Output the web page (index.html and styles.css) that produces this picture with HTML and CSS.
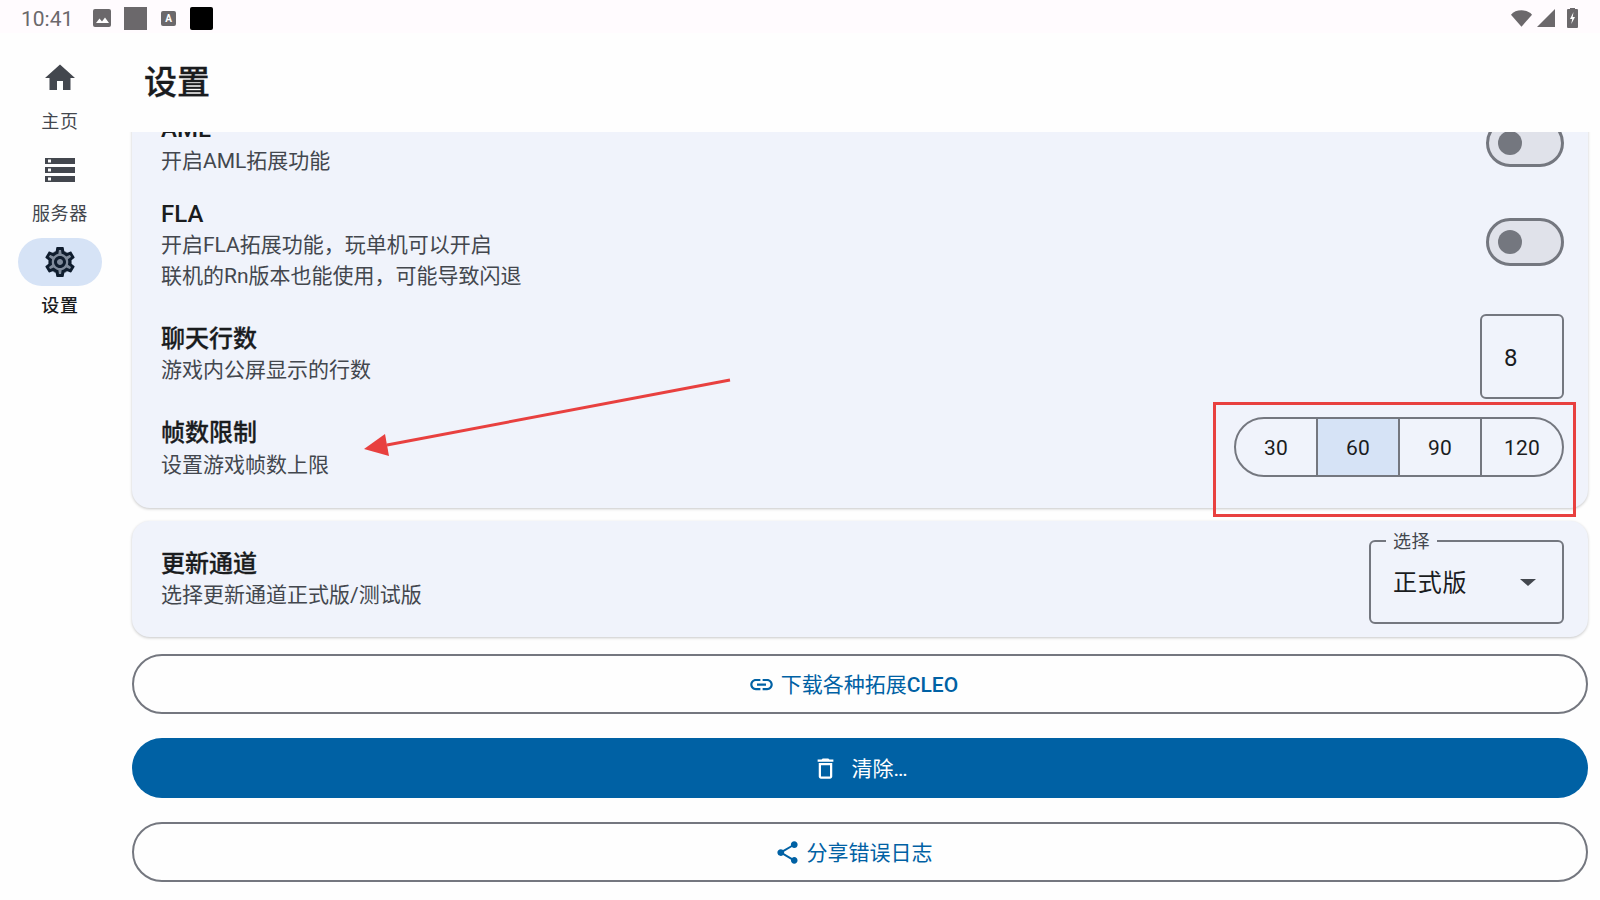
FILE: index.html
```html
<!DOCTYPE html>
<html lang="zh-CN">
<head>
  <meta charset="UTF-8">
  <title>设置</title>
  <link rel="stylesheet" href="styles.css">
</head>
<body>
  <div class="phone">

    <div class="statusbar">
      <span class="time">10:41</span>
      <svg class="st-image" viewBox="0 0 18 18"><rect width="18" height="18" rx="2" fill="#6b686b"/><path d="M3 14l3.5-4.5 2.5 3 3-4 4 5.500z" fill="#fff"/></svg>
      <span class="st-square"></span>
      <span class="st-a">A</span>
      <span class="st-black"></span>
      <span class="st-spacer"></span>
      <svg class="st-wifi" viewBox="0 0 24 18"><path d="M12 18L1 5.500C3.500 2.500 7.500 1 12 1s8.500 1.500 11 4.500z" fill="#6b686b"/></svg>
      <svg class="st-signal" viewBox="0 0 18 18"><path d="M18 0v18H0z" fill="#6b686b"/></svg>
      <svg class="st-battery" viewBox="0 0 11 20"><path d="M3 1V0h5v1h2a1 1 0 0 1 1 1v17a1 1 0 0 1-1 1H1a1 1 0 0 1-1-1V2a1 1 0 0 1 1-1z" fill="#6b686b"/><path d="M6.500 4L3 11h2.200L4.300 16 8 9H5.700z" fill="#fff"/></svg>
    </div>

    <div class="main">
      <nav class="rail">
        <div class="rail-item">
          <div class="pill">
            <svg class="icon" viewBox="0 0 24 24"><path d="M10 20v-6h4v6h5v-8h3L12 3 2 12h3v8z"/></svg>
          </div>
          <span>主页</span>
        </div>
        <div class="rail-item">
          <div class="pill">
            <svg class="icon" viewBox="0 0 24 24"><path d="M2 20h20v-4H2v4zm2-3h2v2H4v-2zM2 4v4h20V4H2zm4 3H4V5h2v2zm-4 7h20v-4H2v4zm2-3h2v2H4v-2z"/></svg>
          </div>
          <span>服务器</span>
        </div>
        <div class="rail-item active">
          <div class="pill">
            <svg class="icon gear" viewBox="0 0 24 24">
              <circle cx="12" cy="12" r="8" fill="#7f8b9b"/>
              <path d="M19.430 12.980c.04-.32.07-.64.07-.98 0-.34-.03-.66-.07-.98l2.110-1.650c.19-.15.24-.42.12-.64l-2-3.460c-.09-.16-.26-.25-.44-.25-.06 0-.12.01-.17.03l-2.490 1c-.52-.4-1.080-.73-1.690-.98l-.38-2.650C14.460 2.180 14.250 2 14 2h-4c-.25 0-.46.18-.49.42l-.38 2.650c-.61.25-1.170.59-1.690.98l-2.490-1c-.06-.02-.12-.03-.18-.03-.17 0-.34.09-.43.25l-2 3.460c-.13.22-.07.49.12.64l2.110 1.650c-.04.32-.07.65-.07.98 0 .33.03.66.07.98l-2.110 1.650c-.19.15-.24.42-.12.64l2 3.460c.09.16.26.25.44.25.06 0 .12-.01.17-.03l2.490-1c.52.4 1.080.73 1.690.98l.38 2.650c.03.24.24.42.49.42h4c.25 0 .46-.18.49-.42l.38-2.650c.61-.25 1.170-.59 1.690-.98l2.490 1c.06.02.12.03.18.03.17 0 .34-.09.43-.25l2-3.460c.12-.22.07-.49-.12-.64l-2.110-1.650zm-1.980-1.710c.04.31.05.52.05.73 0 .21-.02.43-.05.73l-.14 1.130.89.7 1.080.84-.7 1.210-1.270-.51-1.040-.42-.9.68c-.43.32-.84.56-1.250.73l-1.060.43-.16 1.130-.2 1.350h-1.400l-.19-1.350-.16-1.130-1.060-.43c-.43-.18-.83-.41-1.230-.71l-.91-.7-1.060.43-1.270.51-.7-1.210 1.080-.84.89-.7-.14-1.130c-.03-.31-.05-.54-.05-.74s.02-.43.05-.73l.14-1.130-.89-.7-1.080-.84.7-1.210 1.270.51 1.040.42.9-.68c.43-.32.84-.56 1.250-.73l1.060-.43.16-1.130.2-1.350h1.390l.19 1.350.16 1.130 1.060.43c.43.18.83.41 1.230.71l.91.7 1.060-.43 1.270-.51.7 1.210-1.070.85-.89.7.14 1.130zM12 8c-2.210 0-4 1.790-4 4s1.790 4 4 4 4-1.790 4-4-1.790-4-4-4zm0 6c-1.100 0-2-.9-2-2s.9-2 2-2 2 .9 2 2-.9 2-2 2z"/>
            </svg>
          </div>
          <span>设置</span>
        </div>
      </nav>

      <div class="content">
        <h1 class="page-title">设置</h1>

        <div class="scroller">
          <section class="card card-game">
            <div class="row row-aml">
              <div class="row-text">
                <div class="row-title">AML</div>
                <div class="row-sub">开启AML拓展功能</div>
              </div>
              <div class="switch"><span class="knob"></span></div>
            </div>

            <div class="row row-fla">
              <div class="row-text">
                <div class="row-title">FLA</div>
                <div class="row-sub">开启FLA拓展功能，玩单机可以开启</div>
                <div class="row-sub">联机的Rn版本也能使用，可能导致闪退</div>
              </div>
              <div class="switch"><span class="knob"></span></div>
            </div>

            <div class="row row-chat">
              <div class="row-text">
                <div class="row-title cjk">聊天行数</div>
                <div class="row-sub">游戏内公屏显示的行数</div>
              </div>
              <div class="textfield">8</div>
            </div>

            <div class="row row-fps">
              <div class="row-text">
                <div class="row-title cjk">帧数限制</div>
                <div class="row-sub">设置游戏帧数上限</div>
              </div>
              <div class="segmented">
                <div class="seg">30</div>
                <div class="seg selected">60</div>
                <div class="seg">90</div>
                <div class="seg">120</div>
              </div>
            </div>
          </section>

          <section class="card card-update">
            <div class="row">
              <div class="row-text">
                <div class="row-title cjk">更新通道</div>
                <div class="row-sub">选择更新通道正式版/测试版</div>
              </div>
              <div class="dropdown">
                <span class="dropdown-label">选择</span>
                <span class="dropdown-value">正式版</span>
                <span class="caret"></span>
              </div>
            </div>
          </section>

          <div class="actions">
            <div class="btn btn-outline btn-link">
              <svg class="btn-icon icon-link" viewBox="0 0 24 24"><path d="M3.900 12c0-1.710 1.390-3.100 3.100-3.100h4V7H7c-2.760 0-5 2.240-5 5s2.240 5 5 5h4v-1.900H7c-1.710 0-3.100-1.390-3.100-3.100zM8 13h8v-2H8v2zm9-6h-4v1.900h4c1.710 0 3.100 1.390 3.100 3.100s-1.390 3.100-3.100 3.100h-4V17h4c2.760 0 5-2.240 5-5s-2.240-5-5-5z"/></svg>
              <span class="btn-text">下载各种拓展<b class="latin">CLEO</b></span>
            </div>
            <div class="btn btn-filled">
              <svg class="btn-icon icon-trash" viewBox="0 0 24 24"><path d="M6 19c0 1.100.9 2 2 2h8c1.100 0 2-.9 2-2V7H6v12zM8 9h8v10H8V9zm7.500-5l-1-1h-5l-1 1H5v2h14V4z"/></svg>
              <span class="btn-text">清除…</span>
            </div>
            <div class="btn btn-outline btn-share">
              <svg class="btn-icon" viewBox="0 0 24 24"><path d="M18 16.080c-.76 0-1.440.3-1.960.77L8.910 12.700c.05-.23.09-.46.09-.7s-.04-.47-.09-.7l7.050-4.110c.54.5 1.250.81 2.040.81 1.660 0 3-1.340 3-3s-1.340-3-3-3-3 1.340-3 3c0 .24.04.47.09.7L8.040 9.810C7.500 9.310 6.790 9 6 9c-1.660 0-3 1.340-3 3s1.340 3 3 3c.79 0 1.500-.31 2.040-.81l7.120 4.160c-.05.21-.08.43-.08.65 0 1.610 1.310 2.920 2.920 2.920 1.610 0 2.920-1.310 2.920-2.920s-1.310-2.920-2.920-2.920z"/></svg>
              <span class="btn-text">分享错误日志</span>
            </div>
          </div>
        </div>
      </div>
    </div>

    <!-- red marks drawn on the screenshot -->
    <svg class="marks" viewBox="0 0 1600 900">
      <rect x="1214.500" y="403.500" width="360" height="112" fill="none" stroke="#e8403f" stroke-width="3"/>
      <line x1="730" y1="380" x2="387" y2="445" stroke="#e8403f" stroke-width="3"/>
      <polygon points="364,449 385,434 389,456" fill="#e8403f"/>
    </svg>

  </div>
</body>
</html>
```

FILE: styles.css
```css
* {
  box-sizing: border-box;
}
body {
  margin: 0;
  overflow: hidden;
  background: #fefefe;
  font-family: Roboto, "Noto Sans CJK SC", sans-serif;
  color: #1a1c1e;
}
.phone {
  position: relative;
  display: flex;
  flex-direction: column;
  width: 1600px;
  height: 900px;
  overflow: hidden;
}

/* status bar */
.statusbar {
  display: flex;
  align-items: center;
  height: 33px;
  padding: 3px 22px 0 21px;
  background: #fffbfe;
  flex: none;
}
.time {
  padding-top: 2px;
  font-size: 21px;
  color: #6b686b;
  width: 72px;
}
.st-image {
  width: 18px;
  height: 18px;
}
.st-square {
  width: 23px;
  height: 23px;
  margin-left: 13px;
  background: #6b686b;
}
.st-a {
  width: 15px;
  height: 15px;
  margin-left: 14px;
  border-radius: 2px;
  background: #6b686b;
  color: #fff;
  font-size: 10px;
  font-weight: 700;
  line-height: 15px;
  text-align: center;
}
.st-black {
  width: 23px;
  height: 23px;
  margin-left: 14px;
  border-radius: 2px;
  background: #000;
}
.st-spacer {
  flex: 1;
}
.st-wifi {
  width: 23px;
  height: 18px;
}
.st-signal {
  width: 18px;
  height: 18px;
  margin-left: 4px;
}
.st-battery {
  width: 11px;
  height: 20px;
  margin-left: 12px;
}

.main {
  display: flex;
  flex: 1;
  min-height: 0;
}

/* nav rail */
.rail {
  display: flex;
  flex-direction: column;
  align-items: center;
  gap: 11px;
  width: 120px;
  padding-top: 21px;
  flex: none;
}
.rail-item {
  display: flex;
  flex-direction: column;
  align-items: center;
  gap: 6px;
  font-size: 18px;
  letter-spacing: .75px;
  line-height: 27px;
  color: #43474e;
}
.rail-item.active {
  color: #1a1c1e;
  font-weight: 500;
}
.pill {
  display: flex;
  align-items: center;
  justify-content: center;
  width: 84px;
  height: 48px;
  border-radius: 24px;
}
.rail-item.active .pill {
  background: #d6e3f6;
}
.icon {
  width: 36px;
  height: 36px;
  fill: #43474e;
}
.icon.gear {
  fill: #0f1d2e;
}

/* content */
.content {
  display: flex;
  flex-direction: column;
  flex: 1;
  min-width: 0;
}
.page-title {
  height: 99px;
  margin: 0;
  padding: 28px 0 0 24px;
  font-size: 33px;
  font-weight: 500;
  line-height: 44px;
  -webkit-text-stroke: .3px #1a1c1e;
  flex: none;
}
.scroller {
  flex: 1;
  min-height: 0;
  overflow: hidden;
  padding: 0 12px;
}
.card {
  background: #f0f3fb;
  border-radius: 18px;
  box-shadow: 0 1px 3px rgba(0, 0, 0, .22);
}
.card-game {
  display: flex;
  flex-direction: column;
  margin-top: -30px;
  padding: 10px 24px 27px 29px;
}
.card-update {
  margin-top: 13px;
  padding: 19px 24px 13px 29px;
}
.row {
  display: flex;
  align-items: center;
  justify-content: space-between;
}
.row-text {
  padding-top: 1px;
}
.row-title {
  font-size: 24px;
  font-weight: 500;
  line-height: 33px;
}
.row-title.cjk {
  -webkit-text-stroke: .3px #1a1c1e;
}
.row-sub {
  font-size: 21px;
  line-height: 31px;
  color: #43474e;
}
.row-fla .row-title, .row-chat .row-title, .card-update .row-title {
  line-height: 32px;
}
.row-aml .switch {
  margin-bottom: 4px;
}
.row-fla {
  margin-top: 20px;
}
.row-fla .switch {
  margin-bottom: 5px;
}
.row-chat {
  margin-top: 22px;
}
.row-chat .row-text {
  margin-bottom: 6px;
}
.row-fps {
  margin-top: 17px;
}
.row-fps .segmented {
  margin-bottom: 4px;
}
.card-update .row-text {
  margin-bottom: 6px;
}

/* controls */
.switch {
  display: flex;
  align-items: center;
  width: 78px;
  height: 48px;
  padding-left: 9px;
  border: 3px solid #74777f;
  border-radius: 24px;
  background: #e0e2ea;
}
.knob {
  width: 24px;
  height: 24px;
  border-radius: 50%;
  background: #74777f;
}
.textfield {
  width: 84px;
  height: 85px;
  padding-left: 22px;
  border: 2px solid #74777f;
  border-radius: 6px;
  font-size: 24px;
  line-height: 85px;
}
.segmented {
  display: flex;
  width: 330px;
  height: 60px;
  overflow: hidden;
  border: 2px solid #74777f;
  border-radius: 30px;
}
.seg {
  flex: 1;
  border-left: 2px solid #74777f;
  font-size: 21px;
  letter-spacing: .15px;
  line-height: 58px;
  text-align: center;
}
.seg:first-child {
  border-left: 0;
}
.seg.selected {
  background: #d6e3f6;
}
.dropdown {
  position: relative;
  display: flex;
  align-items: center;
  justify-content: space-between;
  width: 195px;
  height: 84px;
  padding: 0 26px 0 22px;
  border: 2px solid #74777f;
  border-radius: 6px;
}
.dropdown-label {
  position: absolute;
  top: -9px;
  left: 15px;
  padding: 0 7px;
  background: #f0f3fb;
  color: #43474e;
  font-size: 18px;
  letter-spacing: .4px;
  line-height: 18px;
}
.dropdown-value {
  padding-bottom: 4px;
  font-size: 24px;
  letter-spacing: .75px;
}
.caret {
  width: 0;
  height: 0;
  border-top: 7px solid #43474e;
  border-left: 8px solid transparent;
  border-right: 8px solid transparent;
}

/* buttons */
.actions {
  display: flex;
  flex-direction: column;
  gap: 24px;
  margin-top: 17px;
}
.btn {
  display: flex;
  align-items: center;
  justify-content: center;
  gap: 6px;
  height: 60px;
  border-radius: 30px;
  font-size: 21px;
}
.btn-text {
  padding-bottom: 2px;
}
.latin {
  font-weight: 500;
}
.btn-outline {
  border: 2px solid #74777f;
  color: #0061a4;
}
.btn-filled {
  gap: 12px;
  background: #0061a4;
  color: #fff;
}
.btn-link, .btn-share {
  padding-right: 14px;
}
.btn-icon {
  width: 27px;
  height: 27px;
  fill: currentColor;
}

/* annotation layer */
.marks {
  position: absolute;
  top: 0;
  left: 0;
  width: 1600px;
  height: 900px;
  pointer-events: none;
}
```
